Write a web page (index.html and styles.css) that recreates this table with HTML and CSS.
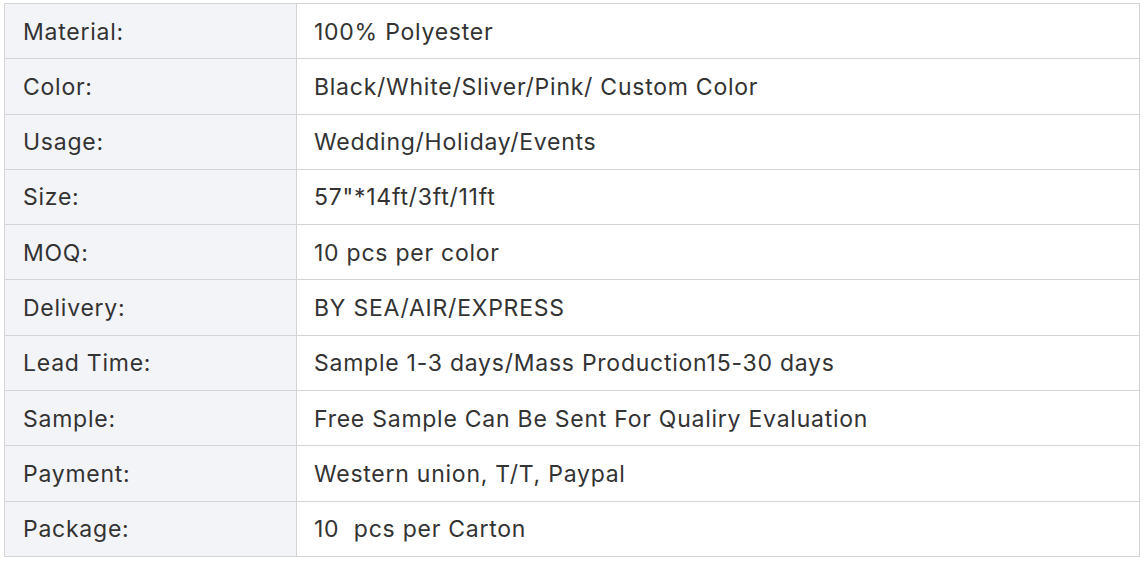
FILE: index.html
```html
<!DOCTYPE html>
<html lang="en">
<head>
	<meta charset="utf-8">
	<title>Product Specification</title>
	<meta name="viewport" content="width=device-width, initial-scale=1">
	<link rel="stylesheet" href="styles.css">
</head>
<body>

<!-- product spec table -->
<table class="spec">
	<tr><td class="label">Material:</td><td>100% Polyester</td></tr>
	<tr><td class="label">Color:</td><td>Black/White/Sliver/Pink/ Custom Color</td></tr>
	<tr><td class="label">Usage:</td><td>Wedding/Holiday/Events</td></tr>
	<tr><td class="label">Size:</td><td>57"*14ft/3ft/11ft</td></tr>
	<tr><td class="label">MOQ:</td><td>10 pcs per color</td></tr>
	<tr><td class="label">Delivery:</td><td>BY SEA/AIR/EXPRESS</td></tr>
	<tr><td class="label">Lead Time:</td><td>Sample 1-3 days/Mass Production15-30 days</td></tr>
	<tr><td class="label">Sample:</td><td>Free Sample Can Be Sent For Qualiry Evaluation</td></tr>
	<tr><td class="label">Payment:</td><td>Western union, T/T, Paypal</td></tr>
	<tr><td class="label">Package:</td><td>10&nbsp; pcs per Carton</td></tr>
</table>

</body>
</html>
```

FILE: styles.css
```css
body {
  margin: 3px 0 0 4px;
  font-family: "Inter", sans-serif;
  background: #fff;
}

.spec {
  width: 1136px;
  border-collapse: collapse;
  font-size: 23px;
  letter-spacing: 0.75px;
  color: #333;
}

.spec td {
  border: 1px solid #d4d4d8;
  padding: 11.65px 18px 10.65px 17px;
  line-height: 32px;
}

.spec td.label {
  width: 255px;
  padding-left: 18px;
  background-color: #f3f4f8;
}
```
